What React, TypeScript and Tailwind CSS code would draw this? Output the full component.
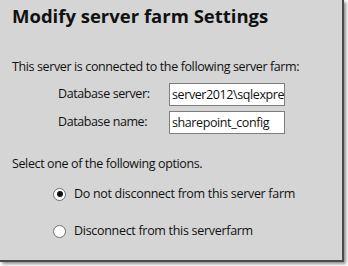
import React, { useState } from 'react';

export default function App() {
  const [choice, setChoice] = useState<'keep' | 'disconnect'>('keep');

  const options = [
    { key: 'keep' as const, label: 'Do not disconnect from this server farm' },
    { key: 'disconnect' as const, label: 'Disconnect from this serverfarm' },
  ];

  return (
    <div className="w-[348px] h-[266px] bg-white">
      <div
        className="w-[344px] h-[262px] bg-[#d5d5d5] border-r-2 border-b-2 border-[#4a4a4a] shadow-[2px_2px_3px_rgba(0,0,0,0.45)] text-[#111] flex flex-col"
        style={{ fontFamily: '"Open Sans", "Noto Sans", sans-serif' }}
      >
        {/* Title */}
        <h1 className="pl-[12px] pt-[4px] text-[18.5px] leading-[24px] font-bold tracking-[0px]">
          Modify server farm Settings
        </h1>

        <p className="pl-[12px] mt-[31px] text-[12.5px] leading-[16px] tracking-[-0.38px]">
          This server is connected to the following server farm:
        </p>

        {/* Connection fields */}
        <div className="mt-[8px] flex flex-col gap-[5px] text-[12.5px] tracking-[-0.4px]">
          <div className="flex items-center">
            <span className="pl-[58px] w-[169px]">Database server:</span>
            <div className="w-[116px] h-[23px] bg-white border border-[#7d7d7d] pl-[2px] leading-[21px] overflow-hidden whitespace-nowrap">
              server2012\sqlexpre
            </div>
          </div>
          <div className="flex items-center">
            <span className="pl-[58px] w-[169px]">Database name:</span>
            <div className="w-[116px] h-[23px] bg-white border border-[#7d7d7d] pl-[2px] leading-[21px] overflow-hidden whitespace-nowrap">
              sharepoint_config
            </div>
          </div>
        </div>

        <p className="pl-[12px] mt-[22px] text-[12.5px] leading-[16px] tracking-[-0.38px]">
          Select one of the following options.
        </p>

        {/* Options */}
        <div className="mt-[14px] flex flex-col gap-[21px] pl-[53px] text-[12.5px] tracking-[-0.3px]">
          {options.map(opt => (
            <label key={opt.key} className="flex items-center gap-[8px] h-[16px] cursor-default" onClick={() => setChoice(opt.key)}>
              <span className="w-[13px] h-[13px] rounded-full border border-[#6e6e6e] bg-white flex items-center justify-center">
                {choice === opt.key && <span className="w-[6px] h-[6px] rounded-full bg-[#111]" />}
              </span>
              <span>{opt.label}</span>
            </label>
          ))}
        </div>
      </div>
    </div>
  );
}
